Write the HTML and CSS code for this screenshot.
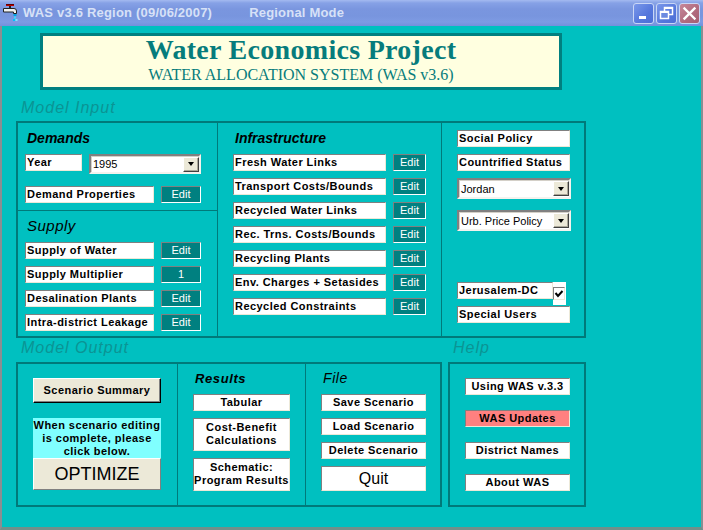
FILE: index.html
```html
<!DOCTYPE html>
<html>
<head>
<meta charset="utf-8">
<title>WAS v3.6 Region</title>
<link rel="stylesheet" href="styles.css">
</head>
<body>
<div class="window">
  <div class="titlebar">
    <svg class="app-icon" viewBox="0 0 15 17" width="15" height="17">
      <rect x="3" y="0" width="8" height="2" fill="#c00000"/>
      <rect x="3" y="0" width="8" height="1" fill="#600000"/>
      <rect x="6" y="2" width="2" height="2" fill="#222"/>
      <path d="M0.5 4.5 H11 Q13.5 4.5 13.5 7 V9.5 H10.5 V8 H0.5 Z" fill="#f0f0f0" stroke="#222" stroke-width="1"/>
      <rect x="10.5" y="10" width="3" height="2" fill="#00a0e0"/>
      <rect x="11" y="12.5" width="2" height="2" fill="#40d8ff"/>
      <rect x="10" y="15" width="2" height="2" fill="#00c0ff"/>
      <rect x="12.5" y="15" width="2" height="2" fill="#80e8ff"/>
    </svg>
    <span class="title">WAS v3.6 Region (09/06/2007)</span>
    <span class="mode">Regional Mode</span>
    <div class="caps">
      <div class="cap cap-blue">
        <svg viewBox="0 0 21 21" width="21" height="21"><rect x="6" y="13" width="7" height="3" fill="#fff"/></svg>
      </div>
      <div class="cap cap-blue">
        <svg viewBox="0 0 21 21" width="21" height="21"><rect x="8.5" y="4.5" width="8" height="7" fill="none" stroke="#fff" stroke-width="1.5"/><rect x="8" y="4" width="9" height="2" fill="#fff"/><rect x="4.5" y="8.5" width="8" height="7" fill="#6c8be0" stroke="#fff" stroke-width="1.5"/><rect x="4" y="8" width="9" height="2" fill="#fff"/></svg>
      </div>
      <div class="cap cap-red">
        <svg viewBox="0 0 21 21" width="21" height="21"><path d="M5.5 5.5 L15.5 15.5 M15.5 5.5 L5.5 15.5" stroke="#fff" stroke-width="2.4" stroke-linecap="square"/></svg>
      </div>
    </div>
  </div>

  <div class="client">
    <div class="header">
      <div class="h-title">Water Economics Project</div>
      <div class="h-sub">WATER ALLOCATION SYSTEM (WAS v3.6)</div>
    </div>

    <div class="sec-label">Model Input</div>

    <div class="panel input-panel">
      <div class="col-a">
        <div class="demands">
          <div class="grp">Demands</div>
          <div class="row first">
            <div class="lbl w-year">Year</div>
            <div class="combo w-year-combo"><span>1995</span><span class="drop"><i class="tri"></i></span></div>
          </div>
          <div class="row gap12">
            <div class="lbl w129">Demand Properties</div>
            <div class="edit w40">Edit</div>
          </div>
        </div>
        <div class="supply">
          <div class="grp grp-light">Supply</div>
          <div class="row first">
            <div class="lbl w129">Supply of Water</div>
            <div class="edit w40">Edit</div>
          </div>
          <div class="row">
            <div class="lbl w129">Supply Multiplier</div>
            <div class="edit w40">1</div>
          </div>
          <div class="row">
            <div class="lbl w129">Desalination Plants</div>
            <div class="edit w40">Edit</div>
          </div>
          <div class="row">
            <div class="lbl w129">Intra-district Leakage</div>
            <div class="edit w40">Edit</div>
          </div>
        </div>
      </div>

      <div class="col-b">
        <div class="grp">Infrastructure</div>
        <div class="row first"><div class="lbl w153">Fresh Water Links</div><div class="edit w33">Edit</div></div>
        <div class="row"><div class="lbl w153">Transport Costs/Bounds</div><div class="edit w33">Edit</div></div>
        <div class="row"><div class="lbl w153">Recycled Water Links</div><div class="edit w33">Edit</div></div>
        <div class="row"><div class="lbl w153">Rec. Trns. Costs/Bounds</div><div class="edit w33">Edit</div></div>
        <div class="row"><div class="lbl w153">Recycling Plants</div><div class="edit w33">Edit</div></div>
        <div class="row"><div class="lbl w153">Env. Charges + Setasides</div><div class="edit w33">Edit</div></div>
        <div class="row"><div class="lbl w153">Recycled Constraints</div><div class="edit w33">Edit</div></div>
      </div>

      <div class="col-c">
        <div class="lbl w113">Social Policy</div>
        <div class="lbl w113 mt7">Countrified Status</div>
        <div class="combo w114 h21 mt7"><span>Jordan</span><span class="drop"><i class="tri"></i></span></div>
        <div class="combo w114 h21 mt11"><span>Urb. Price Policy</span><span class="drop"><i class="tri"></i></span></div>
        <div class="chk-row">
          <div class="lbl w96">Jerusalem-DC</div>
          <div class="chk-wrap">
            <div class="chk">
              <svg viewBox="0 0 10 10" width="10" height="10"><path d="M1.5 4 L4 7 L8.5 2" fill="none" stroke="#000" stroke-width="2"/></svg>
            </div>
          </div>
        </div>
        <div class="lbl w113 mt1">Special Users</div>
      </div>
    </div>

    <div class="out-labels">
      <div class="ol-left">Model Output</div>
      <div class="ol-right">Help</div>
    </div>

    <div class="out-row">
      <div class="panel out-panel">
        <div class="oc1">
          <div class="btn-raised">Scenario Summary</div>
          <div class="note">When scenario editing<br>is complete, please<br>click below.</div>
          <div class="optimize">OPTIMIZE</div>
        </div>
        <div class="oc2">
          <div class="grp grp2">Results</div>
          <div class="wbtn h17 mt8">Tabular</div>
          <div class="wbtn h33 mt7">Cost-Benefit<br>Calculations</div>
          <div class="wbtn h33 mt7">Schematic:<br>Program Results</div>
        </div>
        <div class="oc3">
          <div class="grp grp2 file">File</div>
          <div class="wbtn w105 h17 mt8">Save Scenario</div>
          <div class="wbtn w105 h17 mt7">Load Scenario</div>
          <div class="wbtn w105 h17 mt7">Delete Scenario</div>
          <div class="wbtn w105 quit mt7">Quit</div>
        </div>
      </div>
      <div class="panel help-panel">
        <div class="wbtn w105 h17">Using WAS v.3.3</div>
        <div class="wbtn w105 h17 mt15 pink">WAS Updates</div>
        <div class="wbtn w105 h17 mt15">District Names</div>
        <div class="wbtn w105 h17 mt15">About WAS</div>
      </div>
    </div>
  </div>
</div>
</body>
</html>
```

FILE: styles.css
```css
* { box-sizing: border-box; }

body {
  margin: 0;
  width: 703px;
  height: 530px;
  overflow: hidden;
  font-family: "Liberation Sans", Arial, sans-serif;
  background: #00c0c0;
}

.window {
  width: 703px;
  height: 530px;
  display: flex;
  flex-direction: column;
}

/* ---------- title bar ---------- */
.titlebar {
  height: 26px;
  flex: none;
  display: flex;
  align-items: center;
  padding-left: 3px;
  background: linear-gradient(#a4baf0 0, #86a1e6 3px, #7a96df 9px, #7895de 16px, #7e9be3 22px, #7390dc 26px);
  color: #d7e1f7;
  font-size: 13px;
  font-weight: bold;
  line-height: 26px;
  white-space: nowrap;
}
.app-icon { flex: none; margin-right: 5px; margin-top: -2px; }
.title { letter-spacing: 0.2px; }
.mode { margin-left: 37px; letter-spacing: 0.2px; }
.caps { margin-left: auto; margin-right: 3px; display: flex; gap: 2px; }
.cap {
  width: 21px;
  height: 21px;
  border: 1px solid #c9d6f6;
  border-radius: 3px;
  overflow: hidden;
  display: flex;
  align-items: center;
  justify-content: center;
}
.cap svg { flex: none; }
.cap-blue { background: linear-gradient(135deg, #7a98ea, #5577dc 60%, #4d6fd6); }
.cap-red { background: linear-gradient(135deg, #c7889a, #b06a7e 60%, #a65f73); }

/* ---------- client area ---------- */
.client {
  flex: 1;
  display: flex;
  flex-direction: column;
  border-left: 2px solid #8a8e92;
  border-right: 2px solid #8a8e92;
  border-bottom: 3px solid #70908a;
  padding-top: 7px;
  background: #00c0c0;
}

.header {
  margin-left: 38px;
  width: 522px;
  height: 57px;
  flex: none;
  border: 3px solid #008080;
  background: #ffffe0;
  text-align: center;
  font-family: "Liberation Serif", "Times New Roman", serif;
  color: #067c7c;
}
.h-title { font-size: 28px; line-height: 28px; font-weight: bold; letter-spacing: 0.3px; }
.h-sub { font-size: 16px; line-height: 18px; margin-top: 2px; }

.sec-label {
  height: 31px;
  flex: none;
  padding: 9px 0 0 19px;
  font-size: 16px;
  line-height: 18px;
  font-style: italic;
  color: #0b9494;
  letter-spacing: 1px;
}

.panel { border: 2px solid #007a7a; }

.input-panel {
  margin-left: 14px;
  width: 570px;
  height: 217px;
  flex: none;
  display: flex;
}

.col-a {
  width: 200px;
  border-right: 1px solid #007a7a;
  display: flex;
  flex-direction: column;
}
.demands {
  height: 88px;
  border-bottom: 1px solid #007a7a;
  padding: 8px 0 0 7px;
}
.supply { padding: 6px 0 0 7px; }
.col-b {
  width: 224px;
  border-right: 1px solid #007a7a;
  padding: 8px 0 0 15px;
}
.col-c {
  width: 142px;
  padding: 7px 0 0 15px;
  display: flex;
  flex-direction: column;
  align-items: flex-start;
}

.grp {
  height: 15px;
  font-size: 14px;
  line-height: 15px;
  font-weight: bold;
  font-style: italic;
  color: #000;
  margin-left: 2px;
}
.grp-light {
  height: 17px;
  font-size: 15px;
  line-height: 17px;
  font-weight: normal;
  letter-spacing: 0.5px;
}
.grp2 { font-size: 13px; letter-spacing: 0.6px; }
.file { font-weight: normal; font-size: 14px; margin-left: 2px; }

.row { display: flex; gap: 7px; margin-top: 7px; }
.row.first { margin-top: 8px; }
.row.gap12 { margin-top: 12px; }

.lbl {
  height: 17px;
  flex: none;
  background: #fff;
  border: 1px solid;
  border-color: #808080 #ece9d8 #ece9d8 #808080;
  font-size: 11px;
  font-weight: bold;
  letter-spacing: 0.45px;
  line-height: 15px;
  padding-left: 1px;
  white-space: nowrap;
  overflow: hidden;
  color: #000;
}
.w-year { width: 57px; }
.w129 { width: 129px; }
.w153 { width: 153px; }
.w113 { width: 113px; }
.w96 { width: 96px; }

.edit {
  height: 17px;
  flex: none;
  background: #008080;
  color: #fff;
  font-size: 11px;
  line-height: 15px;
  text-align: center;
  border: 1px solid;
  border-color: #808080 #ffffff #ffffff #808080;
}
.w40 { width: 40px; }
.w33 { width: 33px; }

.combo {
  flex: none;
  display: flex;
  align-items: center;
  background: #fff;
  border: 2px solid;
  border-color: #808080 #f4f3ee #f4f3ee #808080;
  box-shadow: inset 1px 1px 0 #d4d0c8;
  font-size: 11px;
  padding-left: 2px;
  color: #000;
  white-space: nowrap;
}
.w-year-combo { width: 112px; height: 20px; }
.w114 { width: 114px; }
.h21 { height: 21px; }
.drop {
  margin-left: auto;
  width: 16px;
  height: 15px;
  background: #ece9d8;
  border: 1px solid;
  border-color: #ffffff #404040 #404040 #ffffff;
  box-shadow: inset -1px -1px 0 #aca899;
  display: flex;
  align-items: center;
  justify-content: center;
}
.tri {
  width: 0;
  height: 0;
  border-left: 3.5px solid transparent;
  border-right: 3.5px solid transparent;
  border-top: 4px solid #000;
}

.mt1 { margin-top: 1px; }
.mt7 { margin-top: 7px; }
.mt8 { margin-top: 8px; }
.mt11 { margin-top: 11px; }
.mt15 { margin-top: 15px; }

.chk-row { display: flex; margin-top: 51px; }
.chk-wrap {
  width: 13px;
  height: 23px;
  background: #fff;
  padding-top: 5px;
}
.chk {
  width: 12px;
  height: 13px;
  border: 1px solid;
  border-color: #808080 #ece9d8 #ece9d8 #808080;
  display: flex;
  align-items: center;
  justify-content: center;
}

/* ---------- output ---------- */
.out-labels {
  height: 24px;
  flex: none;
  display: flex;
  margin-left: 14px;
  padding-top: 1px;
  font-size: 16px;
  line-height: 18px;
  font-style: italic;
  color: #0b9494;
  letter-spacing: 1px;
}
.ol-left { width: 432px; padding-left: 5px; }
.ol-right { padding-left: 5px; }

.out-row { display: flex; gap: 6px; margin-left: 14px; }
.out-panel { width: 426px; height: 145px; display: flex; }
.help-panel { width: 138px; height: 145px; padding: 14px 0 0 15px; }

.oc1 { width: 160px; border-right: 1px solid #007a7a; padding: 14px 0 0 15px; }
.oc2 { width: 128px; border-right: 1px solid #007a7a; padding: 7px 0 0 15px; }
.oc3 { flex: 1; padding: 7px 0 0 15px; }

.btn-raised {
  width: 128px;
  height: 25px;
  background: #ece9d8;
  border: 1px solid;
  border-color: #ffffff #000000 #000000 #ffffff;
  box-shadow: inset -1px -1px 0 #808080;
  font-size: 11px;
  font-weight: bold;
  letter-spacing: 0.45px;
  text-align: center;
  line-height: 22px;
  color: #000;
}
.note {
  margin-top: 15px;
  width: 128px;
  height: 40px;
  background: #80ffff;
  font-size: 11px;
  font-weight: bold;
  letter-spacing: 0.45px;
  line-height: 13px;
  text-align: center;
  padding-top: 1px;
  color: #000;
}
.optimize {
  width: 128px;
  height: 32px;
  background: #ece9d8;
  border: 1px solid;
  border-color: #ffffff #808080 #808080 #ffffff;
  font-size: 18px;
  line-height: 30px;
  text-align: center;
  color: #000;
}

.wbtn {
  width: 97px;
  background: #fff;
  border: 1px solid;
  border-color: #808080 #ece9d8 #ece9d8 #808080;
  font-size: 11px;
  font-weight: bold;
  letter-spacing: 0.45px;
  text-align: center;
  color: #000;
  white-space: nowrap;
}
.h17 { height: 17px; line-height: 15px; }
.h33 { height: 33px; line-height: 13px; padding-top: 2px; }
.w105 { width: 105px; }
.quit { height: 25px; font-size: 16px; font-weight: normal; letter-spacing: 0; line-height: 23px; }
.pink { background: #ff8080; }
```
